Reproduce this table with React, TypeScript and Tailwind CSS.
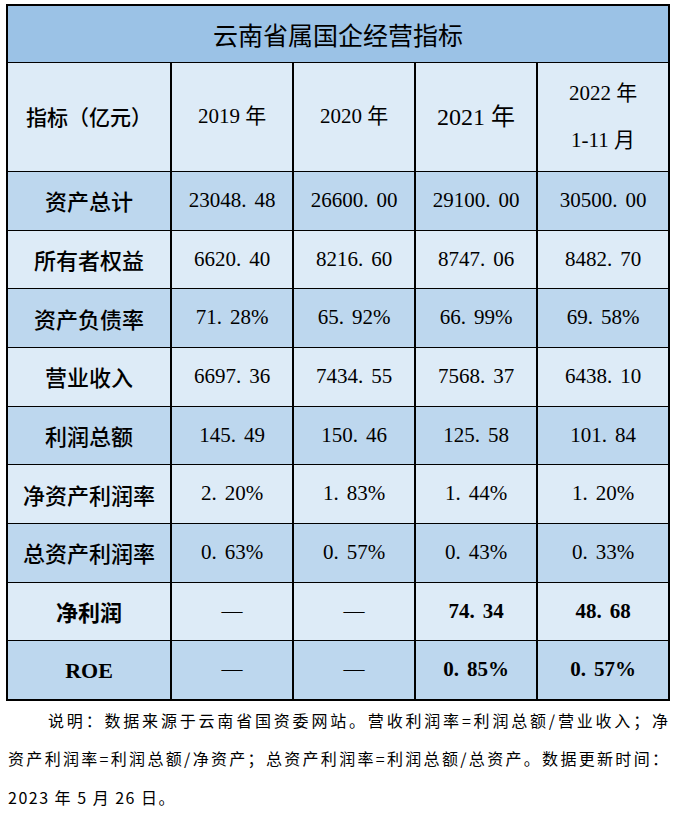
import React from "react";

type Row = { label: string; vals: string[]; dark?: boolean; bold?: boolean };

const rows: Row[] = [
  { label: "资产总计", vals: ["23048.48", "26600.00", "29100.00", "30500.00"], dark: true },
  { label: "所有者权益", vals: ["6620.40", "8216.60", "8747.06", "8482.70"] },
  { label: "资产负债率", vals: ["71.28%", "65.92%", "66.99%", "69.58%"], dark: true },
  { label: "营业收入", vals: ["6697.36", "7434.55", "7568.37", "6438.10"] },
  { label: "利润总额", vals: ["145.49", "150.46", "125.58", "101.84"], dark: true },
  { label: "净资产利润率", vals: ["2.20%", "1.83%", "1.44%", "1.20%"] },
  { label: "总资产利润率", vals: ["0.63%", "0.57%", "0.43%", "0.33%"], dark: true },
  { label: "净利润", vals: ["—", "—", "74.34", "48.68"], bold: true },
  { label: "ROE", vals: ["—", "—", "0.85%", "0.57%"], dark: true, bold: true },
];

function Num({ v }: { v: string }) {
  const i = v.indexOf(".");
  if (i < 0) return <>{v}</>;
  return (
    <>
      {v.slice(0, i)}
      <span className="mr-[8px]">.</span>
      {v.slice(i + 1)}
    </>
  );
}

export default function App() {
  return (
    <div className="w-[674px] h-[819px] bg-white text-black overflow-hidden">
      <div className="ml-[6px] mt-[4px] w-[664px] grid grid-cols-[162px_120px_120px_120px_130px] grid-rows-[56px_108px_repeat(9,57.67px)] gap-x-[2px] gap-y-px bg-black border-2 border-black">
        <div className="col-span-5 bg-[#9BC2E6] flex items-center justify-center pt-[2px] text-[25px] [font-family:'Noto_Sans_CJK_SC',sans-serif]">
          云南省属国企经营指标
        </div>
        <div className="bg-[#DDEBF7] flex items-center justify-center text-[21px] font-medium [font-family:'Noto_Sans_CJK_SC',sans-serif]">
          指标（亿元）
        </div>
        <div className="bg-[#DDEBF7] flex items-center justify-center text-[21px] [font-family:'Liberation_Serif','Noto_Sans_CJK_SC',serif]">
          2019 年
        </div>
        <div className="bg-[#DDEBF7] flex items-center justify-center text-[21px] [font-family:'Liberation_Serif','Noto_Sans_CJK_SC',serif]">
          2020 年
        </div>
        <div className="bg-[#DDEBF7] flex items-center justify-center text-[24px] [font-family:'Liberation_Serif','Noto_Sans_CJK_SC',serif]">
          2021 年
        </div>
        <div className="bg-[#DDEBF7] flex flex-col items-center justify-center leading-[47px] text-[21px] [font-family:'Liberation_Serif','Noto_Sans_CJK_SC',serif]">
          <div>2022 年</div>
          <div>1-11 月</div>
        </div>
        {rows.map((r) => {
          const bg = r.dark ? "bg-[#BDD7EE]" : "bg-[#DDEBF7]";
          return (
            <React.Fragment key={r.label}>
              <div
                className={`${bg} flex items-center justify-center text-[22px] ${
                  r.bold ? "font-bold" : "font-medium"
                } ${
                  r.label === "ROE"
                    ? "[font-family:'Liberation_Serif',serif] text-[21px]"
                    : "[font-family:'Noto_Sans_CJK_SC',sans-serif]"
                }`}
              >
                {r.label}
              </div>
              {r.vals.map((v, j) => (
                <div
                  key={j}
                  className={`${bg} flex items-center justify-center text-[21px] ${
                    r.bold && v !== "—" ? "font-bold" : ""
                  } [font-family:'Liberation_Serif','Noto_Sans_CJK_SC',serif]`}
                >
                  <Num v={v} />
                </div>
              ))}
            </React.Fragment>
          );
        })}
      </div>
      <div className="ml-[8px] w-[660px] text-[16px] leading-[38.5px] [font-family:'Noto_Sans_CJK_SC',sans-serif]">
        <div className="pl-[40px] text-justify [text-align-last:justify] [text-justify:inter-character]">
          说明：数据来源于云南省国资委网站。营收利润率=利润总额/营业收入；净
        </div>
        <div className="text-justify [text-align-last:justify] [text-justify:inter-character]">
          资产利润率=利润总额/净资产；总资产利润率=利润总额/总资产。数据更新时间：
        </div>
        <div className="tracking-[1.5px]">2023 年 5 月 26 日。</div>
      </div>
    </div>
  );
}
